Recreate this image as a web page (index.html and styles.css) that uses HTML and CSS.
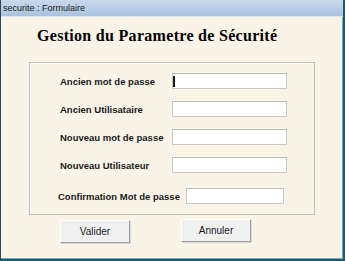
FILE: index.html
```html
<!DOCTYPE html>
<html lang="fr">

<head>
	<meta charset="UTF-8">
	<title>securite : Formulaire</title>
	<link rel="stylesheet" href="styles.css">
</head>

<body>
	<div class="window">
		<div class="titlebar">securite : Formulaire</div>
		<div class="content">
			<h1 class="heading">Gestion du Parametre de Sécurité</h1>
			<div class="frame">
				<div class="row">
					<label>Ancien mot de passe</label>
					<span class="field focus"><input type="password"><span class="caret"></span></span>
				</div>
				<div class="row">
					<label>Ancien Utilisataire</label>
					<span class="field"><input type="text"></span>
				</div>
				<div class="row">
					<label>Nouveau mot de passe</label>
					<span class="field"><input type="password"></span>
				</div>
				<div class="row">
					<label>Nouveau Utilisateur</label>
					<span class="field"><input type="text"></span>
				</div>
				<div class="row last">
					<label>Confirmation Mot de passe</label>
					<span class="field short"><input type="password"></span>
				</div>
			</div>
			<div class="buttons">
				<button class="btn">Valider</button>
				<button class="btn up">Annuler</button>
			</div>
		</div>
	</div>
</body>

</html>
```

FILE: styles.css
```css
html,
body {
	margin: 0;
	padding: 0;
}

body {
	width: 345px;
	height: 261px;
	overflow: hidden;
	font-family: "Liberation Sans", Arial, sans-serif;
}

.window {
	display: flex;
	flex-direction: column;
	height: 261px;
	box-sizing: border-box;
	border-left: 1px solid #2b4656;
	border-right: 2px solid #1b5a6c;
	border-bottom: 2px solid #1b5a6c;
	background: #faf3e8;
	box-shadow: inset -1px -1px 0 #6aaebd;
}

.titlebar {
	height: 16px;
	line-height: 16px;
	padding-left: 2px;
	font-size: 9px;
	color: #1a1a1a;
	background: linear-gradient(#c9d9ec, #a9c2df);
	border-bottom: 1px solid #dfe6ee;
}

.content {
	flex: 1;
	margin-right: 1px;
	margin-bottom: 1px;
}

.heading {
	margin: 11px 0 0 36px;
	font: bold 16px/16px "Liberation Serif", "Times New Roman", serif;
	letter-spacing: 0.3px;
	color: #000;
}

.frame {
	display: flex;
	flex-direction: column;
	gap: 12px;
	width: 286px;
	height: 153px;
	box-sizing: border-box;
	margin: 18px 0 0 28px;
	padding: 10px 0 0 30px;
	border: 1px solid #c3c0ba;
	box-shadow: inset 1px 1px 0 #fff;
}

.row {
	display: flex;
	align-items: center;
	height: 16px;
}

.row.last {
	margin-top: 3px;
	margin-left: -2px;
}

.row label {
	min-width: 110px;
	margin-right: 2px;
	font-size: 9.5px;
	font-weight: bold;
	color: #1a1a1a;
	white-space: nowrap;
}

.field {
	position: relative;
	display: block;
}

.field input {
	display: block;
	width: 115px;
	height: 16px;
	box-sizing: border-box;
	margin: 0;
	border: 1px solid #c9c9c9;
	border-top-color: #bdbdbd;
	background: #fff;
	outline: none;
}

.field.short {
	margin-left: 4px;
}

.field.short input {
	width: 98px;
}

.caret {
	position: absolute;
	left: 1px;
	top: 3px;
	width: 2px;
	height: 11px;
	background: #1a1a1a;
}

.buttons {
	display: flex;
	align-items: flex-start;
	gap: 51px;
	margin: 5px 0 0 59px;
}

.btn {
	width: 70px;
	height: 23px;
	margin: 0;
	padding: 0;
	font-family: "Liberation Sans", Arial, sans-serif;
	font-size: 10px;
	color: #1a1a1a;
	background: #f0f0f0;
	border: 1px solid #fff;
	border-right-color: #a0a0a0;
	border-bottom-color: #a0a0a0;
	box-shadow: 1px 1px 0 #d8d8d8;
}

.btn.up {
	margin-top: -1px;
}
```
